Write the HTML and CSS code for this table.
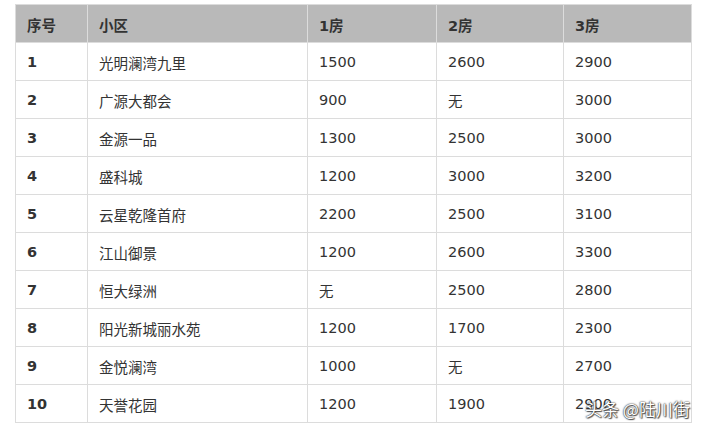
FILE: index.html
```html
<!DOCTYPE html>
<html lang="zh">
<head>
<meta charset="utf-8">
<link rel="stylesheet" href="styles.css">
</head>
<body>
<div class="wrap">
<table class="tbl">
<colgroup>
<col class="c1"><col class="c2"><col class="c3"><col class="c4"><col class="c5">
</colgroup>
<thead>
<tr><th>序号</th><th>小区</th><th>1房</th><th>2房</th><th>3房</th></tr>
</thead>
<tbody>
<tr><td class="num">1</td><td>光明澜湾九里</td><td>1500</td><td>2600</td><td>2900</td></tr>
<tr><td class="num">2</td><td>广源大都会</td><td>900</td><td>无</td><td>3000</td></tr>
<tr><td class="num">3</td><td>金源一品</td><td>1300</td><td>2500</td><td>3000</td></tr>
<tr><td class="num">4</td><td>盛科城</td><td>1200</td><td>3000</td><td>3200</td></tr>
<tr><td class="num">5</td><td>云星乾隆首府</td><td>2200</td><td>2500</td><td>3100</td></tr>
<tr><td class="num">6</td><td>江山御景</td><td>1200</td><td>2600</td><td>3300</td></tr>
<tr><td class="num">7</td><td>恒大绿洲</td><td>无</td><td>2500</td><td>2800</td></tr>
<tr><td class="num">8</td><td>阳光新城丽水苑</td><td>1200</td><td>1700</td><td>2300</td></tr>
<tr><td class="num">9</td><td>金悦澜湾</td><td>1000</td><td>无</td><td>2700</td></tr>
<tr><td class="num">10</td><td>天誉花园</td><td>1200</td><td>1900</td><td>2900</td></tr>
</tbody>
</table>
<div class="mark">头条 @陆川街</div>
</div>
</body>
</html>
```
FILE: styles.css
```css
html, body {
  margin: 0;
  padding: 0;
  background: #fff;
}
.wrap {
  position: relative;
  padding: 4px 0 0 15px;
  width: 677px;
}
.tbl {
  border-collapse: collapse;
  table-layout: fixed;
  width: 677px;
  font-family: "DejaVu Sans", "Noto Sans CJK SC", sans-serif;
  font-size: 14.5px;
  color: #333;
}
.c1 { width: 72px; }
.c2 { width: 220px; }
.c3 { width: 129px; }
.c4 { width: 127px; }
.c5 { width: 128px; }
.tbl th, .tbl td {
  border: 1px solid #dcdcdc;
  height: 38px;
  padding: 1px 0 0 11px;
  text-align: left;
  vertical-align: middle;
  box-sizing: border-box;
}
.tbl th {
  background: #b9b9b9;
  font-weight: bold;
  color: #333;
}
.tbl td.num {
  font-weight: bold;
}
.mark {
  position: absolute;
  left: 585px;
  top: 400px;
  line-height: 1;
  font-family: "Noto Sans CJK SC", sans-serif;
  font-size: 17px;
  color: #fff;
  text-shadow: 0 0 1px #333, 0 0 2px #333, 1px 1px 1px #555;
  white-space: nowrap;
}
```
